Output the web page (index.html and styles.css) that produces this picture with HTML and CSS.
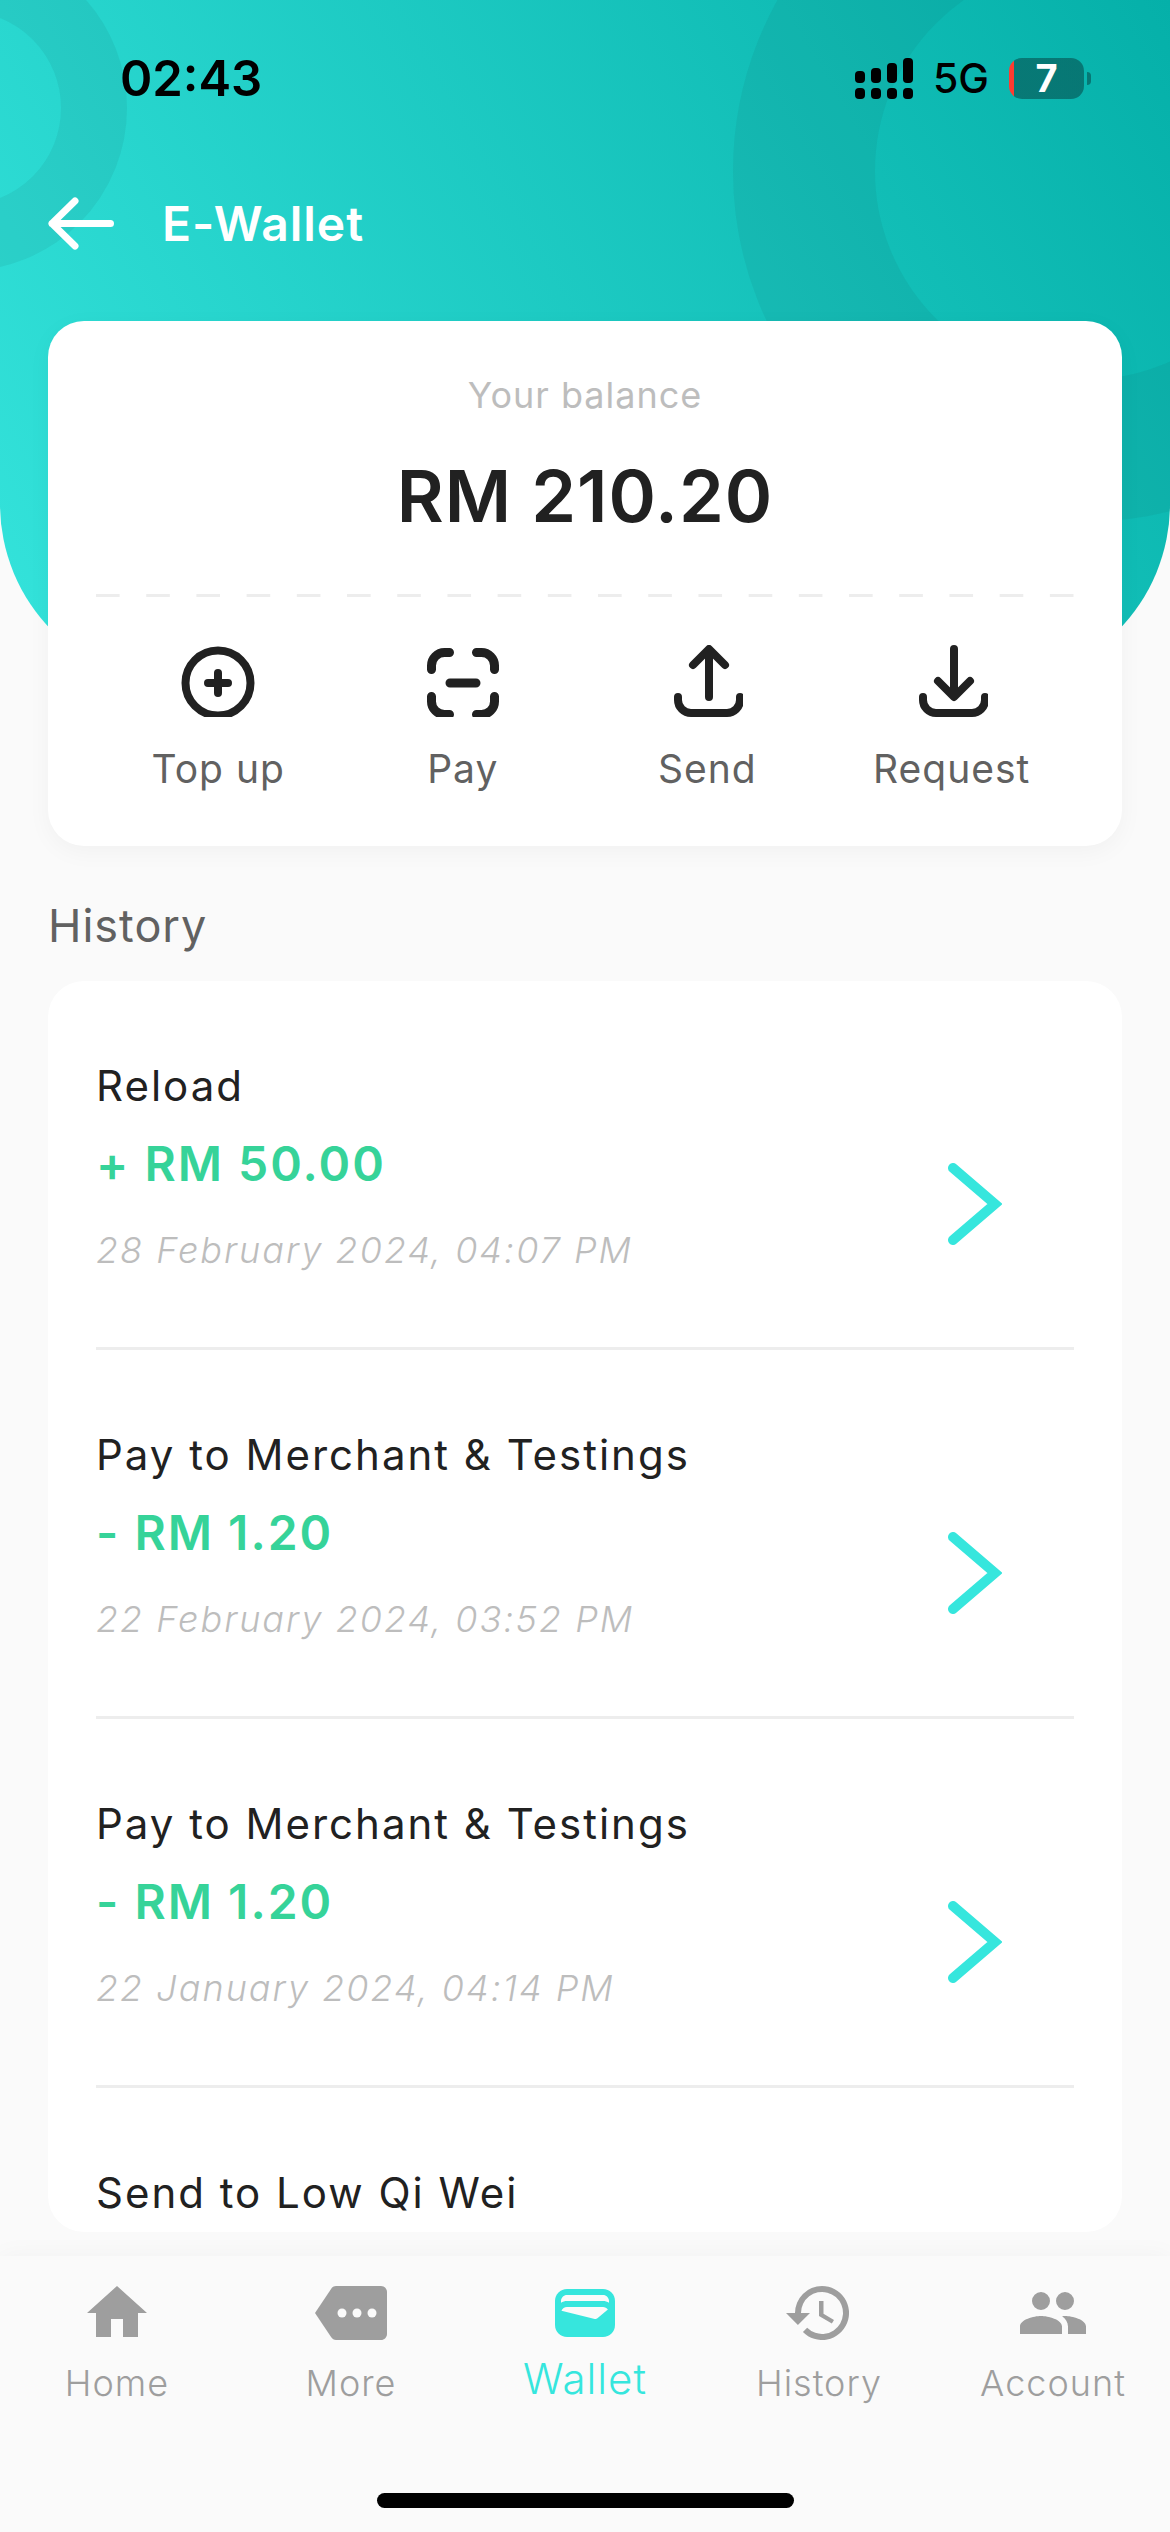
FILE: index.html
```html
<!DOCTYPE html>
<html lang="en">
<head>
<meta charset="utf-8">
<meta name="viewport" content="width=device-width, initial-scale=1">
<title>E-Wallet</title>
<link rel="stylesheet" href="styles.css">
</head>
<body>
<div class="app">
  <div class="backdrop" aria-hidden="true"></div>

  <div class="status">
    <span class="clock">02:43</span>
    <div class="status-right">
      <svg class="signal" viewBox="0 0 58 41" aria-hidden="true">
        <rect x="0" y="13" width="10" height="12" rx="4"/><rect x="16" y="10" width="10" height="15" rx="4"/><rect x="32" y="5" width="10" height="20" rx="4"/><rect x="48" y="0" width="10" height="25" rx="4"/>
        <rect x="0" y="30" width="10" height="11" rx="4"/><rect x="16" y="30" width="10" height="11" rx="4"/><rect x="32" y="30" width="10" height="11" rx="4"/><rect x="48" y="30" width="10" height="11" rx="4"/>
      </svg>
      <span class="network">5G</span>
      <span class="battery">7</span>
    </div>
  </div>

  <header class="topbar">
    <button class="back" aria-label="Back">
      <svg viewBox="0 0 66 53" aria-hidden="true"><path d="M62.500 26.500H4M27 4 4 26.500 27 49"/></svg>
    </button>
    <h1 class="title">E-Wallet</h1>
  </header>

  <main class="content">
    <section class="balance">
      <p class="balance-label">Your balance</p>
      <p class="balance-amount">RM 210.20</p>
      <div class="dashes"></div>
      <div class="actions">
        <button class="action">
          <svg viewBox="0 0 90 72" aria-hidden="true"><circle cx="45" cy="38" r="32.500"/><path d="M45 28v20M35 38h20"/></svg>
          <span>Top up</span>
        </button>
        <button class="action">
          <svg class="heavy" viewBox="0 0 90 72" aria-hidden="true"><path d="M13.500 24.500v-4a13 13 0 0 1 13-13h5M58.500 7.500h5a13 13 0 0 1 13 13v4M13.500 51.500v5a13 13 0 0 0 13 13h5M58.500 69.500h5a13 13 0 0 0 13-13v-5M32 38h26"/></svg>
          <span>Pay</span>
        </button>
        <button class="action">
          <svg viewBox="0 0 90 72" aria-hidden="true"><svg width="81" height="72"><path d="M47 52V5M31 20 47 4l16 16"/><path d="M16 52v3a13 13 0 0 0 13 13h36a13 13 0 0 0 13-13v-3"/></svg></svg>
          <span>Send</span>
        </button>
        <button class="action">
          <svg viewBox="0 0 90 72" aria-hidden="true"><svg width="81" height="72"><path d="M47 4v47M31 36l16 16 16-16"/><path d="M16 52v3a13 13 0 0 0 13 13h36a13 13 0 0 0 13-13v-3"/></svg></svg>
          <span>Request</span>
        </button>
      </div>
    </section>

    <h2 class="section-title">History</h2>

    <ul class="history">
      <li class="entry">
        <a href="#reload">
          <span class="entry-name">Reload</span>
          <span class="entry-row">
            <span class="entry-text"><span class="entry-amount">+ RM 50.00</span><time class="entry-date">28 February 2024, 04:07 PM</time></span>
            <svg class="chevron" viewBox="0 0 54 82" aria-hidden="true"><path d="M5 5 47 41 5 77"/></svg>
          </span>
        </a>
      </li>
      <li class="entry">
        <a href="#pay-february">
          <span class="entry-name">Pay to Merchant &amp; Testings</span>
          <span class="entry-row">
            <span class="entry-text"><span class="entry-amount">- RM 1.20</span><time class="entry-date">22 February 2024, 03:52 PM</time></span>
            <svg class="chevron" viewBox="0 0 54 82" aria-hidden="true"><path d="M5 5 47 41 5 77"/></svg>
          </span>
        </a>
      </li>
      <li class="entry">
        <a href="#pay-january">
          <span class="entry-name">Pay to Merchant &amp; Testings</span>
          <span class="entry-row">
            <span class="entry-text"><span class="entry-amount">- RM 1.20</span><time class="entry-date">22 January 2024, 04:14 PM</time></span>
            <svg class="chevron" viewBox="0 0 54 82" aria-hidden="true"><path d="M5 5 47 41 5 77"/></svg>
          </span>
        </a>
      </li>
      <li class="entry">
        <a href="#send">
          <span class="entry-name">Send to Low Qi Wei</span>
        </a>
      </li>
    </ul>
  </main>

  <nav class="tabs">
    <div class="tab-list">
      <a class="tab" href="#home">
        <svg viewBox="0 0 24 24" aria-hidden="true"><path d="M10 20v-6h4v6h5v-8h3L12 3 2 12h3v8z"/></svg>
        <span>Home</span>
      </a>
      <a class="tab" href="#more">
        <svg viewBox="0 0 24 24" aria-hidden="true"><path d="M22 3H7c-.69 0-1.230.350-1.590.880L0 12l5.410 8.110c.360.530.900.890 1.590.890h15c1.100 0 2-.900 2-2V5c0-1.100-.900-2-2-2z"/><g class="holes"><circle cx="9" cy="12" r="1.500"/><circle cx="14" cy="12" r="1.500"/><circle cx="19" cy="12" r="1.500"/></g></svg>
        <span>More</span>
      </a>
      <a class="tab active" href="#wallet" aria-current="page">
        <svg viewBox="0 0 24 24" aria-hidden="true"><path d="M18 4H6C3.790 4 2 5.790 2 8v8c0 2.210 1.790 4 4 4h12c2.210 0 4-1.790 4-4V8c0-2.210-1.790-4-4-4z"/><path class="holes" d="M4 8.550V8c0-1.100.900-2 2-2h12c1.100 0 2 .900 2 2v.550C19.410 8.210 18.730 8 18 8H6c-.730 0-1.410.210-2 .550zM16.140 13.770c-.240.200-.570.280-.880.200L4.150 11.250C4.450 10.520 5.160 10 6 10h12c.670 0 1.260.340 1.630.840z"/></svg>
        <span>Wallet</span>
      </a>
      <a class="tab" href="#history">
        <svg viewBox="0 0 24 24" aria-hidden="true"><path d="M13 3a9 9 0 0 0-9 9H1l3.890 3.890.070.140L9 12H6a7 7 0 1 1 2.060 4.940l-1.420 1.420A9 9 0 1 0 13 3zm-1 5v5l4.280 2.540.720-1.210-3.500-2.080V8z"/></svg>
        <span>History</span>
      </a>
      <a class="tab" href="#account">
        <svg viewBox="0 0 24 24" aria-hidden="true"><path d="M16 11a3 3 0 1 0 0-6 3 3 0 0 0 0 6zm-8 0a3 3 0 1 0 0-6 3 3 0 0 0 0 6zm0 2c-2.330 0-7 1.170-7 3.500V19h14v-2.500c0-2.330-4.670-3.500-7-3.500zm8 0c-.290 0-.620.020-.970.050 1.160.840 1.970 1.970 1.970 3.450V19h6v-2.500c0-2.330-4.670-3.500-7-3.500z"/></svg>
        <span>Account</span>
      </a>
    </div>
    <div class="home-bar"></div>
  </nav>
</div>
</body>
</html>
```
FILE: styles.css
```css
:root {
  --accent: #36e6dd;
  --ink: #212121;
  --mid: #616161;
  --muted: #9e9e9e;
  --faint: #bdbdbd;
  --line: #ededed;
  --page: #fafafa;
}

*, *::before, *::after { box-sizing: border-box; margin: 0; padding: 0; }

body {
  background: var(--page);
  color: var(--ink);
  font-family: Inter, "Liberation Sans", sans-serif;
  letter-spacing: 1px;
}

button { border: 0; background: none; font: inherit; letter-spacing: inherit; color: inherit; }
a { color: inherit; text-decoration: none; }
ul { list-style: none; }
svg { display: block; }

.app {
  position: relative;
  display: flex;
  flex-direction: column;
  height: 100vh;
  overflow: hidden;
}

/* Gradient behind the top bar and the balance card */
.backdrop {
  position: absolute;
  inset: 0 0 auto;
  height: 684px;
  border-radius: 0 0 180px 180px;
  background: linear-gradient(60deg, #35e4dc, #05b0a9);
  overflow: hidden;
}
.backdrop::before,
.backdrop::after {
  content: "";
  position: absolute;
  border-style: solid;
  border-color: rgba(20, 90, 90, 0.09);
  border-radius: 50%;
}
.backdrop::before { top: -55px; left: -199px; width: 326px; height: 326px; border-width: 66px; }
.backdrop::after { top: -180px; right: -265px; width: 702px; height: 702px; border-width: 142px; }

.status, .topbar, .content, .tabs { position: relative; }

.status {
  display: flex;
  align-items: center;
  justify-content: space-between;
  height: 156px;
  padding: 0 78px 0 120px;
  color: #000;
  letter-spacing: normal;
}
.clock { font-size: 49px; font-weight: 600; }
.status-right { display: flex; align-items: center; }
.signal { width: 58px; height: 41px; }
.network { margin: 0 20px; font-size: 41px; font-weight: 500; }
.battery {
  position: relative;
  width: 75px;
  height: 41px;
  margin-right: 8px;
  border-radius: 13px;
  background: linear-gradient(90deg, #ff3b30 5px, rgba(5, 70, 70, 0.55) 5px);
  color: #fff;
  font-size: 38px;
  font-weight: 700;
  line-height: 41px;
  text-align: center;
}
.battery::after {
  content: "";
  position: absolute;
  top: 14px;
  right: -7px;
  width: 4px;
  height: 13px;
  border-radius: 0 4px 4px 0;
  background: rgba(5, 70, 70, 0.55);
}

.topbar {
  display: flex;
  align-items: center;
  gap: 48px;
  height: 135px;
  padding: 0 48px;
  color: #fff;
}
.back svg { width: 66px; height: 53px; fill: none; stroke: currentColor; stroke-width: 7; stroke-linecap: round; stroke-linejoin: round; }
.title { font-size: 48px; line-height: 58px; font-weight: 600; }

.content {
  flex: 1;
  min-height: 0;
  display: flex;
  flex-direction: column;
  padding: 30px 48px 24px;
}

.balance {
  padding: 52px 48px 53px;
  border-radius: 36px;
  background: #fff;
  box-shadow: 0 6px 24px rgba(0, 0, 0, 0.04);
}
.balance-label { font-size: 36px; line-height: 44px; color: var(--faint); text-align: center; }
.balance-amount { margin-top: 35px; font-size: 72px; line-height: 87px; font-weight: 600; text-align: center; }
.dashes {
  height: 3px;
  margin-top: 55px;
  background: linear-gradient(90deg, var(--line) 24px, transparent 24px) 0 0 / calc((100% - 24px) / 19) 3px;
}
.actions { display: grid; grid-template-columns: repeat(4, 1fr); margin-top: 48px; }
.action { display: flex; flex-direction: column; align-items: center; gap: 28px; }
.action > svg { width: 90px; height: 72px; overflow: hidden; fill: none; stroke: var(--ink); stroke-width: 8; stroke-linecap: round; stroke-linejoin: round; }
.action > .heavy { stroke-width: 9; }
.action span { font-size: 39px; line-height: 48px; color: var(--mid); }

.section-title { margin-top: 52px; font-size: 45px; line-height: 55px; font-weight: 400; color: var(--mid); }

.history {
  flex: 1;
  min-height: 0;
  margin-top: 28px;
  padding: 0 48px;
  border-radius: 36px;
  background: #fff;
  overflow: hidden;
  letter-spacing: 2px;
}
.entry { height: 369px; padding-top: 79px; border-bottom: 3px solid var(--line); }
.entry a { display: block; }
.entry-name { display: block; font-size: 42px; line-height: 51px; }
.entry-row { display: flex; align-items: center; justify-content: space-between; margin-top: 24px; padding-right: 72px; }
.entry-text { display: flex; flex-direction: column; gap: 35px; }
.entry-amount { font-size: 48px; line-height: 58px; font-weight: 600; color: #36d399; }
.entry-date { font-size: 36px; line-height: 44px; font-weight: 300; font-style: italic; color: var(--faint); }
.chevron { width: 54px; height: 82px; fill: none; stroke: var(--accent); stroke-width: 10; stroke-linecap: round; }

.tabs { padding-top: 21px; background: var(--page); box-shadow: 0 0 24px rgba(0, 0, 0, 0.04); }
.tab-list { display: grid; grid-template-columns: repeat(5, 1fr); height: 216px; }
.tab { display: flex; flex-direction: column; align-items: center; gap: 12px; font-size: 36px; line-height: 44px; font-weight: 300; color: var(--muted); }
.tab svg { width: 72px; height: 72px; fill: currentColor; }
.tab .holes { fill: var(--page); }
.tab.active { gap: 4px; font-size: 42px; line-height: 51px; color: var(--accent); }
.home-bar { width: 417px; height: 15px; margin: 0 auto 24px; border-radius: 8px; background: #000; }
```
